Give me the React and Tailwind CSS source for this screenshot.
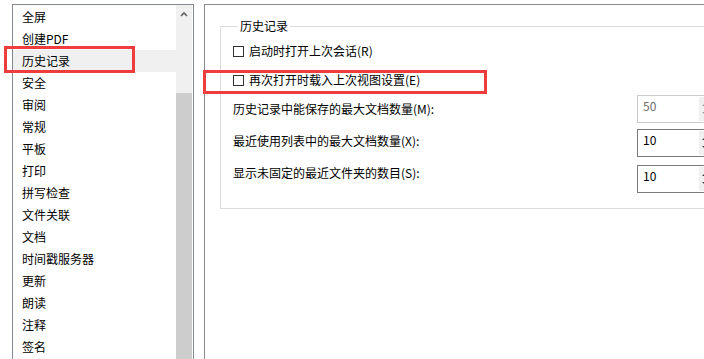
import React from "react";

const items = [
  "全屏",
  "创建PDF",
  "历史记录",
  "安全",
  "审阅",
  "常规",
  "平板",
  "打印",
  "拼写检查",
  "文件关联",
  "文档",
  "时间戳服务器",
  "更新",
  "朗读",
  "注释",
  "签名",
];

function Checkbox({ label }) {
  return (
    <div className="flex items-center h-[18px]">
      <span className="w-[11px] h-[11px] border border-[#333333] bg-white shrink-0" />
      <span className="ml-[5px] text-[12px] leading-[18px] text-black whitespace-nowrap">{label}</span>
    </div>
  );
}

function Spin({ value, disabled }) {
  return (
    <div
      className={
        "w-[80px] h-[28px] border flex shrink-0 bg-white " +
        (disabled ? "border-[#cccccc]" : "border-[#7a7a7a]")
      }
    >
      <div
        className={
          "w-[61px] pl-[5px] pt-[2px] text-[12px] leading-[16px] " +
          (disabled ? "text-[#6d6d6d]" : "text-black")
        }
      >
        {value}
      </div>
      <div className="w-[17px] mt-[1px] mb-[1px] bg-[#f0f0f0]">
        <svg width="17" height="24" viewBox="0 0 17 24">
          <polygon points="3,9 6.5,5.5 10,9" fill={disabled ? "#a0a0a0" : "#404040"} />
          <polygon points="3,15 6.5,18.5 10,15" fill={disabled ? "#a0a0a0" : "#404040"} />
        </svg>
      </div>
    </div>
  );
}

export default function App() {
  return (
    <div
      className="relative w-[704px] h-[359px] overflow-hidden bg-white flex items-start pt-[4px] pl-[12px] text-black"
      style={{ fontFamily: '"Noto Sans CJK SC", "Noto Sans", sans-serif' }}
    >
      {/* Left list */}
      <div className="w-[182px] h-[400px] border border-[#828790] flex shrink-0">
        <div className="w-[163px] pt-[1px] flex flex-col">
          {items.map((it) => (
            <div
              key={it}
              className={
                "h-[22px] pl-[9px] flex items-center text-[12px] leading-[22px] whitespace-nowrap " +
                (it === "历史记录" ? "bg-[#f0f0f0]" : "")
              }
            >
              {it}
            </div>
          ))}
        </div>
        <div className="w-[16px] bg-[#f0f0f0] flex flex-col">
          <div className="h-[17px] flex items-center justify-center">
            <svg width="8" height="6" viewBox="0 0 8 6">
              <polyline points="1,5 4,2 7,5" fill="none" stroke="#606060" strokeWidth="1.6" />
            </svg>
          </div>
          <div className="h-[71px]" />
          <div className="flex-1 bg-[#cdcdcd]" />
        </div>
      </div>

      {/* Right panel */}
      <div className="ml-[10px] w-[520px] h-[400px] border-l border-t border-[#898c95] shrink-0 pl-[15px] pt-[14px]">
        <fieldset className="w-[500px] border border-[#dcdcdc] pl-[12px] pb-[15px]">
          <legend className="ml-[5px] px-[2px] text-[12px] leading-[14px]">历史记录</legend>
          <div className="mt-[9px]">
            <Checkbox label="启动时打开上次会话(R)" />
          </div>
          <div className="mt-[11px]">
            <Checkbox label="再次打开时载入上次视图设置(E)" />
          </div>
          <div className="mt-[6px] flex items-start">
            <div className="w-[404px] mt-[6px] text-[12px] leading-[16px] whitespace-nowrap">
              历史记录中能保存的最大文档数量(M):
            </div>
            <Spin value="50" disabled />
          </div>
          <div className="mt-[6px] flex items-start">
            <div className="w-[404px] mt-[4px] text-[12px] leading-[16px] whitespace-nowrap">
              最近使用列表中的最大文档数量(X):
            </div>
            <Spin value="10" />
          </div>
          <div className="mt-[8px] flex items-start">
            <div className="w-[404px] mt-[0px] text-[12px] leading-[16px] whitespace-nowrap">
              显示未固定的最近文件夹的数目(S):
            </div>
            <Spin value="10" />
          </div>
        </fieldset>
      </div>

      {/* Red annotation boxes */}
      <div className="absolute left-[4px] top-[46px] w-[131px] h-[27px] border-[3px] border-[#ef3d3d]" />
      <div className="absolute left-[203px] top-[70px] w-[284px] h-[24px] border-[3px] border-[#ef3d3d]" />
    </div>
  );
}
